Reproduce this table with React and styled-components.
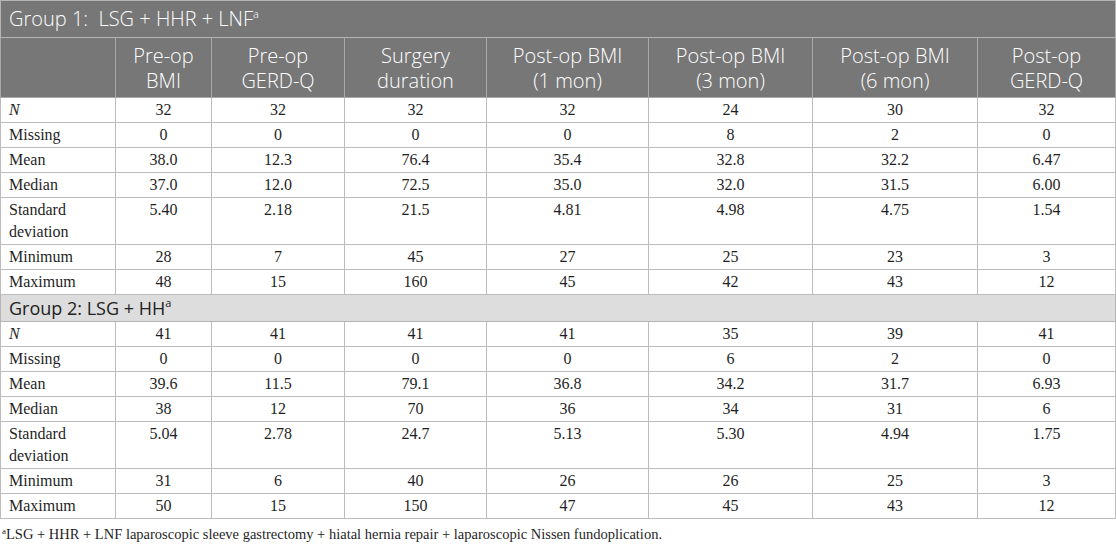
import React from "react";
import styled, { createGlobalStyle } from "styled-components";

const GlobalStyle = createGlobalStyle`
  body {
    margin: 0;
    background: #ffffff;
  }
`;

const Page = styled.div`
  width: 1116px;
`;

const Table = styled.table`
  width: 1116px;
  table-layout: fixed;
  border-collapse: collapse;
  border: 1px solid #b5b5b5;
  font-family: "Liberation Serif", "Times New Roman", serif;
  font-size: 16px;
  color: #1f1f1f;
`;

const TitleCell = styled.th`
  background: ${(p) => (p.$dark ? "#777777" : "#dddddd")};
  color: ${(p) => (p.$dark ? "#ffffff" : "#222222")};
  font-family: "Open Sans", "Noto Sans", sans-serif;
  font-weight: ${(p) => (p.$dark ? 300 : 400)};
  font-size: ${(p) => (p.$dark ? "20px" : "18px")};
  line-height: ${(p) => (p.$dark ? "36px" : "26px")};
  text-align: left;
  padding: 0 8px;
  border: 1px solid #b5b5b5;
  white-space: pre;

  sup {
    font-size: 11px;
    line-height: 0;
    vertical-align: 8px;
  }
`;

const HeadCell = styled.th`
  background: #777777;
  color: #ffffff;
  font-family: "Open Sans", "Noto Sans", sans-serif;
  font-weight: 300;
  font-size: 20px;
  line-height: 25px;
  height: 59px;
  padding: 0 4px;
  text-align: center;
  vertical-align: middle;
  border: 1px solid #a9a9a9;
`;

const Cell = styled.td`
  line-height: 22px;
  padding: 1px 8px;
  text-align: ${(p) => (p.$label ? "left" : "center")};
  vertical-align: top;
  border: 1px solid #bcbcbc;
  font-style: ${(p) => (p.$italic ? "italic" : "normal")};
`;

const Footnote = styled.p`
  margin: 7px 0 0 2px;
  font-family: "Liberation Serif", "Times New Roman", serif;
  font-size: 14.5px;
  color: #1f1f1f;

  sup {
    font-size: 9px;
    vertical-align: 5px;
    line-height: 0;
  }
`;

const widths = [115, 96, 133, 142, 162, 164, 165, 138];

const headerLines = [
  [],
  ["Pre-op", "BMI"],
  ["Pre-op", "GERD-Q"],
  ["Surgery", "duration"],
  ["Post-op BMI", "(1 mon)"],
  ["Post-op BMI", "(3 mon)"],
  ["Post-op BMI", "(6 mon)"],
  ["Post-op", "GERD-Q"],
];

const group1 = [
  ["N", ["32", "32", "32", "32", "24", "30", "32"]],
  ["Missing", ["0", "0", "0", "0", "8", "2", "0"]],
  ["Mean", ["38.0", "12.3", "76.4", "35.4", "32.8", "32.2", "6.47"]],
  ["Median", ["37.0", "12.0", "72.5", "35.0", "32.0", "31.5", "6.00"]],
  ["Standard deviation", ["5.40", "2.18", "21.5", "4.81", "4.98", "4.75", "1.54"]],
  ["Minimum", ["28", "7", "45", "27", "25", "23", "3"]],
  ["Maximum", ["48", "15", "160", "45", "42", "43", "12"]],
];

const group2 = [
  ["N", ["41", "41", "41", "41", "35", "39", "41"]],
  ["Missing", ["0", "0", "0", "0", "6", "2", "0"]],
  ["Mean", ["39.6", "11.5", "79.1", "36.8", "34.2", "31.7", "6.93"]],
  ["Median", ["38", "12", "70", "36", "34", "31", "6"]],
  ["Standard deviation", ["5.04", "2.78", "24.7", "5.13", "5.30", "4.94", "1.75"]],
  ["Minimum", ["31", "6", "40", "26", "26", "25", "3"]],
  ["Maximum", ["50", "15", "150", "47", "45", "43", "12"]],
];

function StatRows({ rows }) {
  return rows.map(([label, values]) => (
    <tr key={label}>
      <Cell $label $italic={label === "N"}>
        {label}
      </Cell>
      {values.map((v, i) => (
        <Cell key={i}>{v}</Cell>
      ))}
    </tr>
  ));
}

export default function App() {
  return (
    <Page>
      <GlobalStyle />
      <Table>
        <colgroup>
          {widths.map((w, i) => (
            <col key={i} style={{ width: w }} />
          ))}
        </colgroup>
        <thead>
          <tr>
            <TitleCell $dark colSpan={8}>
              {"Group 1:  LSG + HHR + LNF"}
              <sup>a</sup>
            </TitleCell>
          </tr>
          <tr>
            {headerLines.map((lines, i) => (
              <HeadCell key={i}>
                {lines.map((l, j) => (
                  <div key={j}>{l}</div>
                ))}
              </HeadCell>
            ))}
          </tr>
        </thead>
        <tbody>
          <StatRows rows={group1} />
          <tr>
            <TitleCell colSpan={8}>
              {"Group 2: LSG + HH"}
              <sup>a</sup>
            </TitleCell>
          </tr>
          <StatRows rows={group2} />
        </tbody>
      </Table>
      <Footnote>
        <sup>a</sup>LSG + HHR + LNF laparoscopic sleeve gastrectomy + hiatal hernia repair + laparoscopic Nissen
        fundoplication.
      </Footnote>
    </Page>
  );
}
